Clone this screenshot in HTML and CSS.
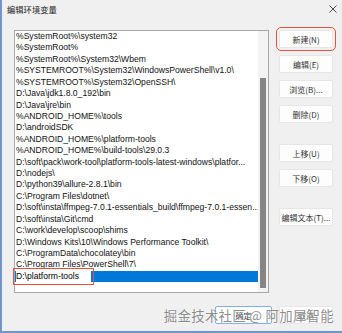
FILE: index.html
```html
<!DOCTYPE html>
<html lang="zh-CN">
<head>
    <meta charset="UTF-8">
    <title>编辑环境变量</title>
    <link rel="stylesheet" href="styles.css">
</head>
<body>
    <div class="window">
        <div class="titlebar">
            <span class="title">编辑环境变量</span>
            <svg class="close" width="8" height="8" viewBox="0 0 8 8">
                <path d="M0.5 0.5 L7.5 7.5 M7.5 0.5 L0.5 7.5" stroke="#333" stroke-width="0.9"/>
            </svg>
        </div>

        <div class="content">
            <div class="list">
                <ul class="items">
                    <li>%SystemRoot%\system32</li>
                    <li>%SystemRoot%</li>
                    <li>%SystemRoot%\System32\Wbem</li>
                    <li>%SYSTEMROOT%\System32\WindowsPowerShell\v1.0\</li>
                    <li>%SYSTEMROOT%\System32\OpenSSH\</li>
                    <li>D:\Java\jdk1.8.0_192\bin</li>
                    <li>D:\Java\jre\bin</li>
                    <li>%ANDROID_HOME%\tools</li>
                    <li>D:\androidSDK</li>
                    <li>%ANDROID_HOME%\platform-tools</li>
                    <li>%ANDROID_HOME%\build-tools\29.0.3</li>
                    <li>D:\soft\pack\work-tool\platform-tools-latest-windows\platfor...</li>
                    <li>D:\nodejs\</li>
                    <li>D:\python39\allure-2.8.1\bin</li>
                    <li>C:\Program Files\dotnet\</li>
                    <li>D:\soft\insta\ffmpeg-7.0.1-essentials_build\ffmpeg-7.0.1-essen...</li>
                    <li>D:\soft\insta\Git\cmd</li>
                    <li>C:\work\develop\scoop\shims</li>
                    <li>D:\Windows Kits\10\Windows Performance Toolkit\</li>
                    <li>C:\ProgramData\chocolatey\bin</li>
                    <li>C:\Program Files\PowerShell\7\</li>
                    <li class="selected"><span class="edit">D:\platform-tools</span></li>
                </ul>
                <div class="scrollbar">
                    <div class="thumb"></div>
                </div>
            </div>

            <div class="buttons">
                <button class="btn marked">新建(N)</button>
                <button class="btn">编辑(E)</button>
                <button class="btn">浏览(B)...</button>
                <button class="btn">删除(D)</button>
                <button class="btn spaced">上移(U)</button>
                <button class="btn">下移(O)</button>
                <button class="btn spaced">编辑文本(T)...</button>
            </div>
        </div>

        <div class="footer">
            <button class="btn default">确定</button>
            <button class="btn">取消</button>
            <span class="watermark">掘金技术社区 @ 阿加犀智能</span>
        </div>
    </div>
</body>
</html>
```

FILE: styles.css
```css
body {
    margin: 0;
    background-color: #f0f0f0;
    font-family: "Liberation Sans", "Noto Sans CJK SC", sans-serif;
}

.window {
    position: relative;
    width: 342px;
    height: 333px;
    box-sizing: border-box;
    background-color: #f0f0f0;
    border-left: 2px solid #6f95cc;
    border-bottom: 2px solid #6f95cc;
}

.titlebar {
    height: 17px;
    display: flex;
    justify-content: space-between;
    align-items: center;
    padding: 0 5px 0 5px;
}

.title {
    font-family: "Noto Sans CJK SC", sans-serif;
    font-size: 8.3px;
    color: #222;
}

.content {
    display: flex;
    padding-left: 12px;
    margin-top: 13px;
}

.list {
    width: 255px;
    height: 263px;
    box-sizing: border-box;
    border: 1px solid #a8a8a8;
    background-color: white;
    display: flex;
}

.items {
    flex: 1;
    list-style: none;
    margin: 0;
    padding: 0;
    min-width: 0;
}

.items li {
    height: 11.43px;
    line-height: 11.43px;
    font-size: 8.6px;
    color: #111;
    padding-left: 1px;
    white-space: nowrap;
    overflow: hidden;
}

.items li.selected {
    background-color: #0078d7;
    overflow: visible;
}

.edit {
    display: inline-block;
    width: 75px;
    height: 11px;
    line-height: 11px;
    background-color: white;
    color: #000;
    outline: 1.5px solid #e0533d;
    outline-offset: 2px;
}

.scrollbar {
    width: 10px;
    background-color: #f3f3f3;
    position: relative;
}

.thumb {
    position: absolute;
    left: 2px;
    width: 6px;
    top: 47px;
    bottom: 4px;
    background-color: #858585;
}

.buttons {
    display: flex;
    flex-direction: column;
    gap: 7px;
    margin-left: 10px;
    width: 54px;
}

.btn {
    height: 18px;
    padding: 0;
    font-family: "Noto Sans CJK SC", sans-serif;
    font-size: 8px;
    color: #333;
    background-color: #fdfdfd;
    border: 1px solid #e6e6e6;
    border-radius: 2px;
}

.btn.marked {
    outline: 1.5px solid #e0533d;
    outline-offset: 2px;
}

.btn.spaced {
    margin-top: 14px;
}

.footer {
    display: flex;
    justify-content: flex-end;
    gap: 7px;
    padding-right: 9px;
    margin-top: 13px;
}

.footer .btn {
    width: 54px;
}

.footer .btn.default {
    width: 57px;
    border-color: #7fb0e0;
}

.watermark {
    position: absolute;
    right: 8px;
    bottom: 6px;
    font-family: "Noto Sans CJK SC", sans-serif;
    font-size: 13.4px;
    letter-spacing: 0.3px;
    color: rgba(120, 120, 120, 0.85);
    text-shadow: 0 0 2px white;
}
```
